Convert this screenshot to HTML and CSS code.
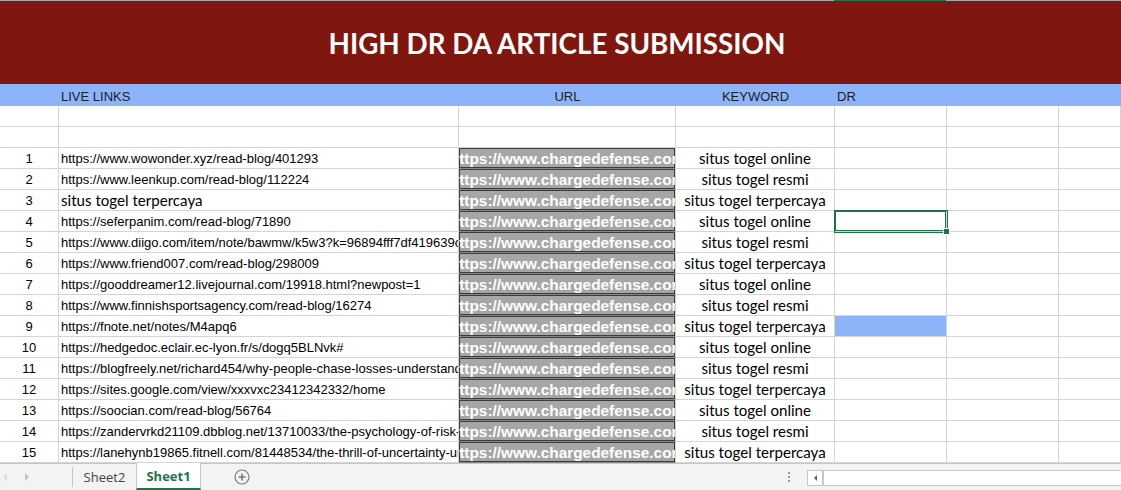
FILE: index.html
```html
<!DOCTYPE html>
<html>
<head>
    <meta charset="utf-8">
    <title>High DR DA Article Submission</title>
    <link rel="stylesheet" href="styles.css">
</head>
<body>
    <div class="top-line"><span class="col-mark"></span></div>
    <div class="banner">
        <h1>HIGH DR DA ARTICLE SUBMISSION</h1>
    </div>

    <div class="sheet">
        <div class="row head-row">
            <div class="cell"></div>
            <div class="cell">LIVE LINKS</div>
            <div class="cell center">URL</div>
            <div class="cell center">KEYWORD</div>
            <div class="cell">DR</div>
            <div class="cell"></div>
            <div class="cell"></div>
        </div>
        <div class="row">
            <div class="cell"></div><div class="cell"></div><div class="cell"></div><div class="cell"></div><div class="cell"></div><div class="cell"></div><div class="cell"></div>
        </div>
        <div class="row">
            <div class="cell"></div><div class="cell"></div><div class="cell"></div><div class="cell"></div><div class="cell"></div><div class="cell"></div><div class="cell"></div>
        </div>

        <div class="row">
            <div class="cell num">1</div>
            <div class="cell link">https://www.wowonder.xyz/read-blog/401293</div>
            <div class="cell url"><span>https://www.chargedefense.com</span></div>
            <div class="cell kw">situs togel online</div>
            <div class="cell"></div><div class="cell"></div><div class="cell"></div>
        </div>
        <div class="row">
            <div class="cell num">2</div>
            <div class="cell link">https://www.leenkup.com/read-blog/112224</div>
            <div class="cell url"><span>https://www.chargedefense.com</span></div>
            <div class="cell kw">situs togel resmi</div>
            <div class="cell"></div><div class="cell"></div><div class="cell"></div>
        </div>
        <div class="row">
            <div class="cell num">3</div>
            <div class="cell link plain">situs togel terpercaya</div>
            <div class="cell url"><span>https://www.chargedefense.com</span></div>
            <div class="cell kw">situs togel terpercaya</div>
            <div class="cell"></div><div class="cell"></div><div class="cell"></div>
        </div>
        <div class="row">
            <div class="cell num">4</div>
            <div class="cell link">https://seferpanim.com/read-blog/71890</div>
            <div class="cell url"><span>https://www.chargedefense.com</span></div>
            <div class="cell kw">situs togel online</div>
            <div class="cell selected"><span class="handle"></span></div><div class="cell"></div><div class="cell"></div>
        </div>
        <div class="row">
            <div class="cell num">5</div>
            <div class="cell link">https://www.diigo.com/item/note/bawmw/k5w3?k=96894fff7df419639cd</div>
            <div class="cell url"><span>https://www.chargedefense.com</span></div>
            <div class="cell kw">situs togel resmi</div>
            <div class="cell"></div><div class="cell"></div><div class="cell"></div>
        </div>
        <div class="row">
            <div class="cell num">6</div>
            <div class="cell link">https://www.friend007.com/read-blog/298009</div>
            <div class="cell url"><span>https://www.chargedefense.com</span></div>
            <div class="cell kw">situs togel terpercaya</div>
            <div class="cell"></div><div class="cell"></div><div class="cell"></div>
        </div>
        <div class="row">
            <div class="cell num">7</div>
            <div class="cell link">https://gooddreamer12.livejournal.com/19918.html?newpost=1</div>
            <div class="cell url"><span>https://www.chargedefense.com</span></div>
            <div class="cell kw">situs togel online</div>
            <div class="cell"></div><div class="cell"></div><div class="cell"></div>
        </div>
        <div class="row">
            <div class="cell num">8</div>
            <div class="cell link">https://www.finnishsportsagency.com/read-blog/16274</div>
            <div class="cell url"><span>https://www.chargedefense.com</span></div>
            <div class="cell kw">situs togel resmi</div>
            <div class="cell"></div><div class="cell"></div><div class="cell"></div>
        </div>
        <div class="row">
            <div class="cell num">9</div>
            <div class="cell link">https://fnote.net/notes/M4apq6</div>
            <div class="cell url"><span>https://www.chargedefense.com</span></div>
            <div class="cell kw">situs togel terpercaya</div>
            <div class="cell filled"></div><div class="cell"></div><div class="cell"></div>
        </div>
        <div class="row">
            <div class="cell num">10</div>
            <div class="cell link">https://hedgedoc.eclair.ec-lyon.fr/s/dogq5BLNvk#</div>
            <div class="cell url"><span>https://www.chargedefense.com</span></div>
            <div class="cell kw">situs togel online</div>
            <div class="cell"></div><div class="cell"></div><div class="cell"></div>
        </div>
        <div class="row">
            <div class="cell num">11</div>
            <div class="cell link">https://blogfreely.net/richard454/why-people-chase-losses-understanding-the-mind</div>
            <div class="cell url"><span>https://www.chargedefense.com</span></div>
            <div class="cell kw">situs togel resmi</div>
            <div class="cell"></div><div class="cell"></div><div class="cell"></div>
        </div>
        <div class="row">
            <div class="cell num">12</div>
            <div class="cell link">https://sites.google.com/view/xxxvxc23412342332/home</div>
            <div class="cell url"><span>https://www.chargedefense.com</span></div>
            <div class="cell kw">situs togel terpercaya</div>
            <div class="cell"></div><div class="cell"></div><div class="cell"></div>
        </div>
        <div class="row">
            <div class="cell num">13</div>
            <div class="cell link">https://soocian.com/read-blog/56764</div>
            <div class="cell url"><span>https://www.chargedefense.com</span></div>
            <div class="cell kw">situs togel online</div>
            <div class="cell"></div><div class="cell"></div><div class="cell"></div>
        </div>
        <div class="row">
            <div class="cell num">14</div>
            <div class="cell link">https://zandervrkd21109.dbblog.net/13710033/the-psychology-of-risk-taking</div>
            <div class="cell url"><span>https://www.chargedefense.com</span></div>
            <div class="cell kw">situs togel resmi</div>
            <div class="cell"></div><div class="cell"></div><div class="cell"></div>
        </div>
        <div class="row">
            <div class="cell num">15</div>
            <div class="cell link">https://lanehynb19865.fitnell.com/81448534/the-thrill-of-uncertainty-unpacked</div>
            <div class="cell url"><span>https://www.chargedefense.com</span></div>
            <div class="cell kw">situs togel terpercaya</div>
            <div class="cell"></div><div class="cell"></div><div class="cell"></div>
        </div>
        <div class="row">
            <div class="cell num"></div>
            <div class="cell link"></div>
            <div class="cell url"></div>
            <div class="cell kw"></div>
            <div class="cell"></div><div class="cell"></div><div class="cell"></div>
        </div>
    </div>

    <div class="tab-bar">
        <div class="nav-arrows">
            <span class="arrow left"></span>
            <span class="arrow right"></span>
        </div>
        <div class="tab">Sheet2</div>
        <div class="tab active">Sheet1</div>
        <div class="add-sheet">
            <svg width="16" height="16" viewBox="0 0 16 16">
                <circle cx="8" cy="8" r="7" fill="none" stroke="#7a7a7a" stroke-width="1.2"/>
                <path d="M8 4.5v7M4.5 8h7" stroke="#7a7a7a" stroke-width="1.6"/>
            </svg>
        </div>
        <div class="spacer"></div>
        <div class="dots">
            <span></span><span></span><span></span>
        </div>
        <div class="hscroll">
            <div class="hscroll-btn">
                <span class="arrow small"></span>
            </div>
            <div class="hscroll-track"></div>
        </div>
    </div>
</body>
</html>
```

FILE: styles.css
```css
html, body {
    margin: 0;
    height: 490px;
    overflow: hidden;
}

body {
    font-family: "Liberation Sans", Arial, sans-serif;
    background: #ffffff;
    color: #000;
    display: flex;
    flex-direction: column;
}

.top-line {
    height: 1px;
    background: #a8a8a8;
    display: flex;
}

.col-mark {
    width: 112px;
    margin-left: 834px;
    background: #217346;
}

.banner {
    height: 83px;
    background: #7f1710;
    display: flex;
    align-items: center;
    justify-content: center;
}

.banner h1 {
    margin: 2px 7px 0 0;
    font-family: Lato, "Open Sans", sans-serif;
    font-weight: 700;
    font-size: 27.8px;
    color: #ffffff;
}

/* grid */
.sheet {
    flex: 1;
    overflow: hidden;
}

.row {
    display: grid;
    grid-template-columns: 59px 400px 217px 159px 112px 112px 1fr;
    height: 21px;
}

.cell {
    box-sizing: border-box;
    border-right: 1px solid #d4d4d4;
    border-bottom: 1px solid #d4d4d4;
    font-size: 13px;
    line-height: 22px;
    white-space: nowrap;
    overflow: hidden;
    padding: 0 2px;
    position: relative;
}

.head-row {
    height: 22px;
    background: #8db4f8;
}

.head-row .cell {
    border: none;
    color: #1c1c2c;
    line-height: 26px;
}

.center {
    text-align: center;
}

.num {
    text-align: center;
}

.link {
    padding-left: 2px;
}

.plain,
.kw {
    font-family: Lato, "Open Sans", sans-serif;
    font-size: 15.1px;
    line-height: 20px;
}

.kw {
    text-align: center;
}

.url {
    background: #a6a6a6;
    border-bottom-color: #888;
    box-shadow: inset 0 0 0 1px #3c3c3c;
    padding: 0;
}

/* text is wider than the cell, so it spills out on both sides */
.url span {
    display: block;
    width: 240px;
    margin-left: -11.5px;
    text-align: center;
    color: #ffffff;
    font-weight: 700;
    font-size: 15.4px;
    line-height: 21px;
}

.filled {
    background: #8db4f8;
}

.selected {
    box-shadow: 0 0 0 1px #217346, inset 0 0 0 1px #217346;
    z-index: 1;
    overflow: visible;
}

.handle {
    position: absolute;
    right: -4px;
    bottom: -4px;
    width: 5px;
    height: 5px;
    background: #217346;
    border: 1px solid #fff;
}

/* sheet tabs */
.tab-bar {
    height: 26px;
    border-top: 1px solid #c6c6c6;
    background: #f3f3f3;
    display: flex;
    align-items: stretch;
    font-family: "Open Sans", "Noto Sans", sans-serif;
    font-size: 13px;
}

.nav-arrows {
    width: 73px;
    border-right: 1px solid #c6c6c6;
    display: flex;
    align-items: center;
    gap: 18px;
    padding-left: 3px;
    box-sizing: border-box;
    margin: 3px 0;
}

.arrow {
    width: 0;
    height: 0;
    border-top: 4px solid transparent;
    border-bottom: 4px solid transparent;
}

.arrow.left {
    border-right: 4px solid #dcdcdc;
}

.arrow.right {
    border-left: 4px solid #c2c2c2;
}

.tab {
    width: 63px;
    display: flex;
    align-items: center;
    justify-content: center;
    color: #444;
}

.tab.active {
    width: 65px;
    background: #ffffff;
    color: #217346;
    font-weight: 700;
    border-left: 1px solid #c6c6c6;
    border-right: 1px solid #c6c6c6;
    border-bottom: 2px solid #217346;
    box-sizing: border-box;
    margin-top: -1px;
}

.add-sheet {
    display: flex;
    align-items: center;
    margin-left: 33px;
}

.spacer {
    flex: 1;
}

.dots {
    display: flex;
    flex-direction: column;
    justify-content: center;
    gap: 2px;
    width: 18px;
    align-items: center;
    margin-right: 9px;
}

.dots span {
    width: 2px;
    height: 2px;
    background: #9a9a9a;
}

.hscroll {
    width: 314px;
    height: 16px;
    align-self: center;
    margin-top: 2px;
    border: 1px solid #c6c6c6;
    border-right: none;
    background: #ffffff;
    display: flex;
    box-sizing: border-box;
}

.hscroll-btn {
    width: 14px;
    border-right: 2px solid #c6c6c6;
    display: flex;
    align-items: center;
    justify-content: center;
}

.arrow.small {
    border-top-width: 3px;
    border-bottom-width: 3px;
    border-right: 3px solid #606060;
}

.hscroll-track {
    flex: 1;
}
```
